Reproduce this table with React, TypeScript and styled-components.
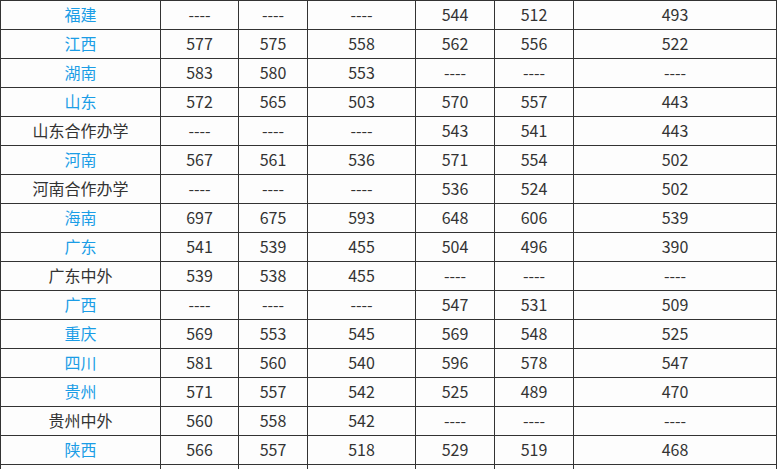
import React from "react";
import styled, { createGlobalStyle } from "styled-components";

const Global = createGlobalStyle`
  html, body { margin: 0; padding: 0; background: #ffffff; }
  body { font-family: "Noto Sans CJK SC", "Noto Sans", sans-serif; overflow: hidden; }
`;

const Table = styled.table`
  border-collapse: collapse;
  table-layout: fixed;
  width: 776px;
  background: #fdfdfd;
  font-family: "Noto Sans CJK SC", "Noto Sans", sans-serif;
  font-size: 16px;
  color: #333333;
`;

const Row = styled.tr`
  height: 29px;
`;

const Cell = styled.td<{ $blue?: boolean }>`
  border: 1px solid #333333;
  padding: 0 0 2px 0;
  height: 26px;
  box-sizing: content-box;
  text-align: center;
  vertical-align: middle;
  line-height: 20px;
  white-space: nowrap;
  color: ${(p) => (p.$blue ? "#1b9de6" : "#333333")};
`;

type R = { name: string; blue: boolean; v: string[] };

const D = "----";
const rows: R[] = [
  { name: "福建", blue: true, v: [D, D, D, "544", "512", "493"] },
  { name: "江西", blue: true, v: ["577", "575", "558", "562", "556", "522"] },
  { name: "湖南", blue: true, v: ["583", "580", "553", D, D, D] },
  { name: "山东", blue: true, v: ["572", "565", "503", "570", "557", "443"] },
  { name: "山东合作办学", blue: false, v: [D, D, D, "543", "541", "443"] },
  { name: "河南", blue: true, v: ["567", "561", "536", "571", "554", "502"] },
  { name: "河南合作办学", blue: false, v: [D, D, D, "536", "524", "502"] },
  { name: "海南", blue: true, v: ["697", "675", "593", "648", "606", "539"] },
  { name: "广东", blue: true, v: ["541", "539", "455", "504", "496", "390"] },
  { name: "广东中外", blue: false, v: ["539", "538", "455", D, D, D] },
  { name: "广西", blue: true, v: [D, D, D, "547", "531", "509"] },
  { name: "重庆", blue: true, v: ["569", "553", "545", "569", "548", "525"] },
  { name: "四川", blue: true, v: ["581", "560", "540", "596", "578", "547"] },
  { name: "贵州", blue: true, v: ["571", "557", "542", "525", "489", "470"] },
  { name: "贵州中外", blue: false, v: ["560", "558", "542", D, D, D] },
  { name: "陕西", blue: true, v: ["566", "557", "518", "529", "519", "468"] },
  { name: "", blue: true, v: ["", "", "", "", "", ""] },
];

const widths = [160, 78, 69, 108, 79, 79, 203];

export default function App() {
  return (
    <>
      <Global />
      <Table>
        <colgroup>
          {widths.map((w, i) => (
            <col key={i} style={{ width: w }} />
          ))}
        </colgroup>
        <tbody>
          {rows.map((r, k) => (
            <Row key={k}>
              <Cell $blue={r.blue}>{r.name}</Cell>
              {r.v.map((x, i) => (
                <Cell key={i}>{x}</Cell>
              ))}
            </Row>
          ))}
        </tbody>
      </Table>
    </>
  );
}
